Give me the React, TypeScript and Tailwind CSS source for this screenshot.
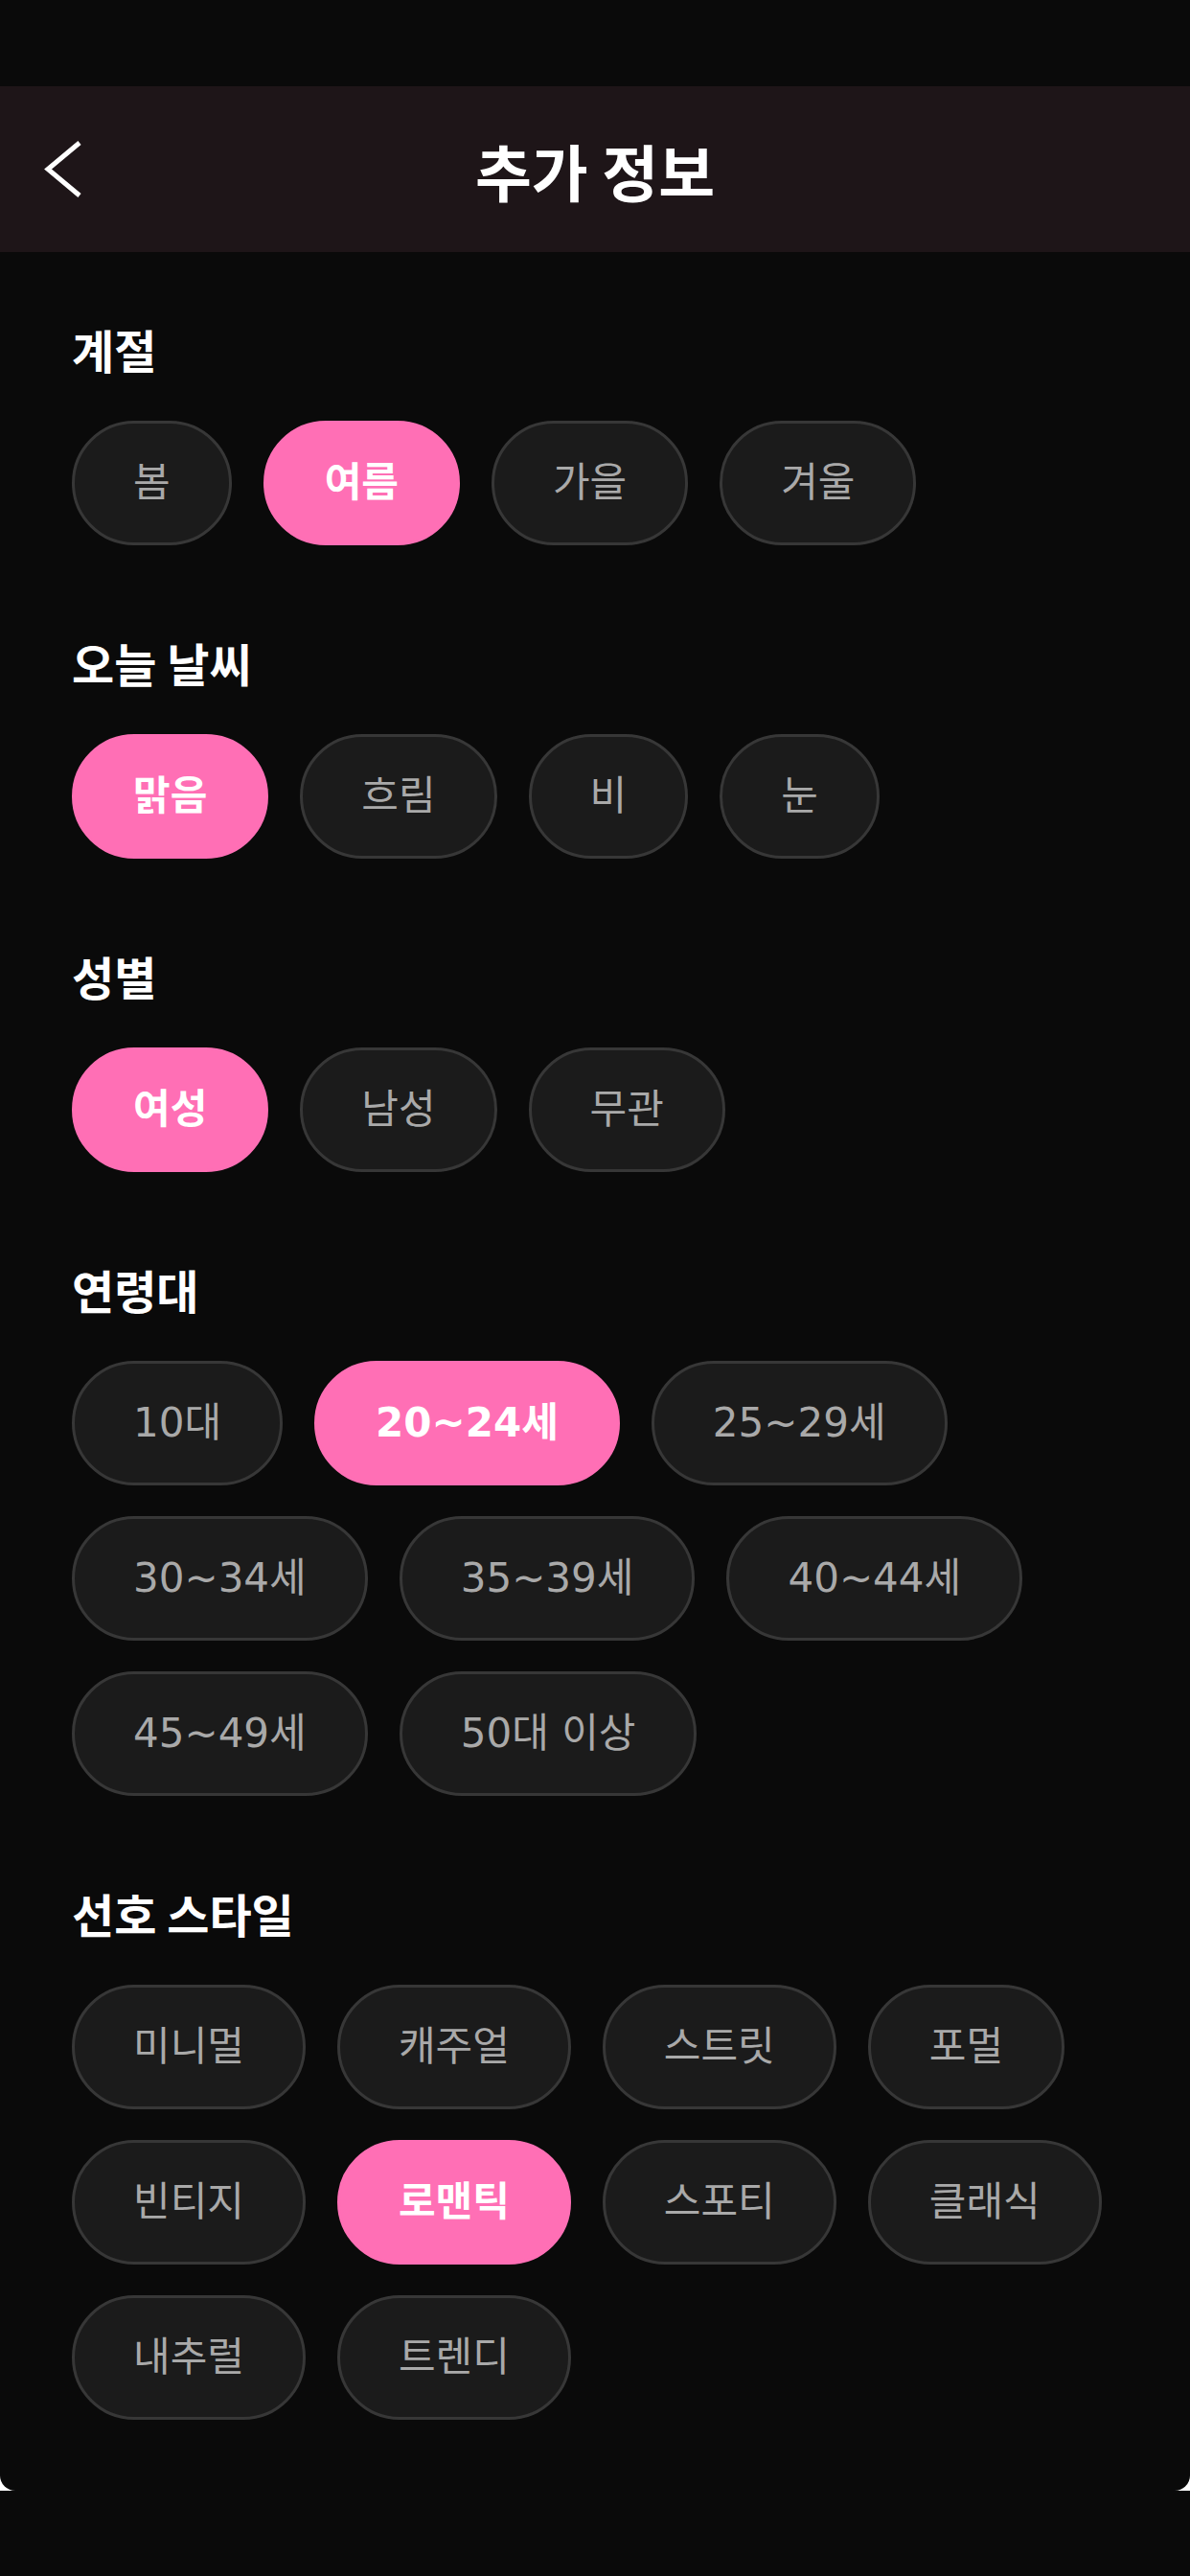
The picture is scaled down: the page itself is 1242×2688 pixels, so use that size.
import React from "react";

type Section = { title: string; items: string[]; selected: string };

const sections: Section[] = [
  { title: "계절", items: ["봄", "여름", "가을", "겨울"], selected: "여름" },
  { title: "오늘 날씨", items: ["맑음", "흐림", "비", "눈"], selected: "맑음" },
  { title: "성별", items: ["여성", "남성", "무관"], selected: "여성" },
  {
    title: "연령대",
    items: ["10대", "20~24세", "25~29세", "30~34세", "35~39세", "40~44세", "45~49세", "50대 이상"],
    selected: "20~24세",
  },
  {
    title: "선호 스타일",
    items: ["미니멀", "캐주얼", "스트릿", "포멀", "빈티지", "로맨틱", "스포티", "클래식", "내추럴", "트렌디"],
    selected: "로맨틱",
  },
];

function Chip({ label, active }: { label: string; active: boolean }) {
  return (
    <div
      className={
        active
          ? "h-[130px] px-[61px] rounded-full border-[3px] border-[#ff6fb5] bg-[#ff6fb5] flex items-center justify-center text-white font-bold text-[42px] leading-none whitespace-nowrap font-['DejaVu_Sans','Noto_Sans_CJK_KR',sans-serif]"
          : "h-[130px] px-[61px] rounded-full border-[3px] border-[#373737] bg-[#1b1b1b] flex items-center justify-center text-[#a9a9a9] font-normal text-[42px] leading-none whitespace-nowrap font-['DejaVu_Sans','Noto_Sans_CJK_KR',sans-serif]"
      }
    >
      {label}
    </div>
  );
}

export default function App() {
  return (
    <div className="min-h-[2688px] w-full bg-[#0a0a0a] font-['Noto_Sans_CJK_KR',sans-serif]">
      <div className="bg-white">
        <div className="bg-[#0a0a0a] rounded-b-[16px]">
          <div className="h-[90px]" />
          <header className="h-[173px] bg-[#1e1518] px-[45px] grid grid-cols-[1fr_auto_1fr] items-center">
            <div className="justify-self-start">
              <svg width="44" height="64" viewBox="0 0 44 64" fill="none">
                <path d="M38 4 L5 31.5 L38 59" stroke="white" strokeWidth="5" strokeLinecap="butt" strokeLinejoin="miter" />
              </svg>
            </div>
            <h1 className="text-white text-[64px] font-bold leading-none">추가 정보</h1>
            <div />
          </header>
          <main className="px-[75px] pt-[71px] pb-[74px] flex flex-col gap-[92px]">
            {sections.map((s) => (
              <section key={s.title}>
                <h2 className="h-[60px] mb-[45px] flex items-center text-white text-[48px] font-bold leading-none">
                  {s.title}
                </h2>
                <div className="flex flex-wrap gap-x-[33px] gap-y-[32px]">
                  {s.items.map((it) => (
                    <Chip key={it} label={it} active={it === s.selected} />
                  ))}
                </div>
              </section>
            ))}
          </main>
        </div>
      </div>
    </div>
  );
}
